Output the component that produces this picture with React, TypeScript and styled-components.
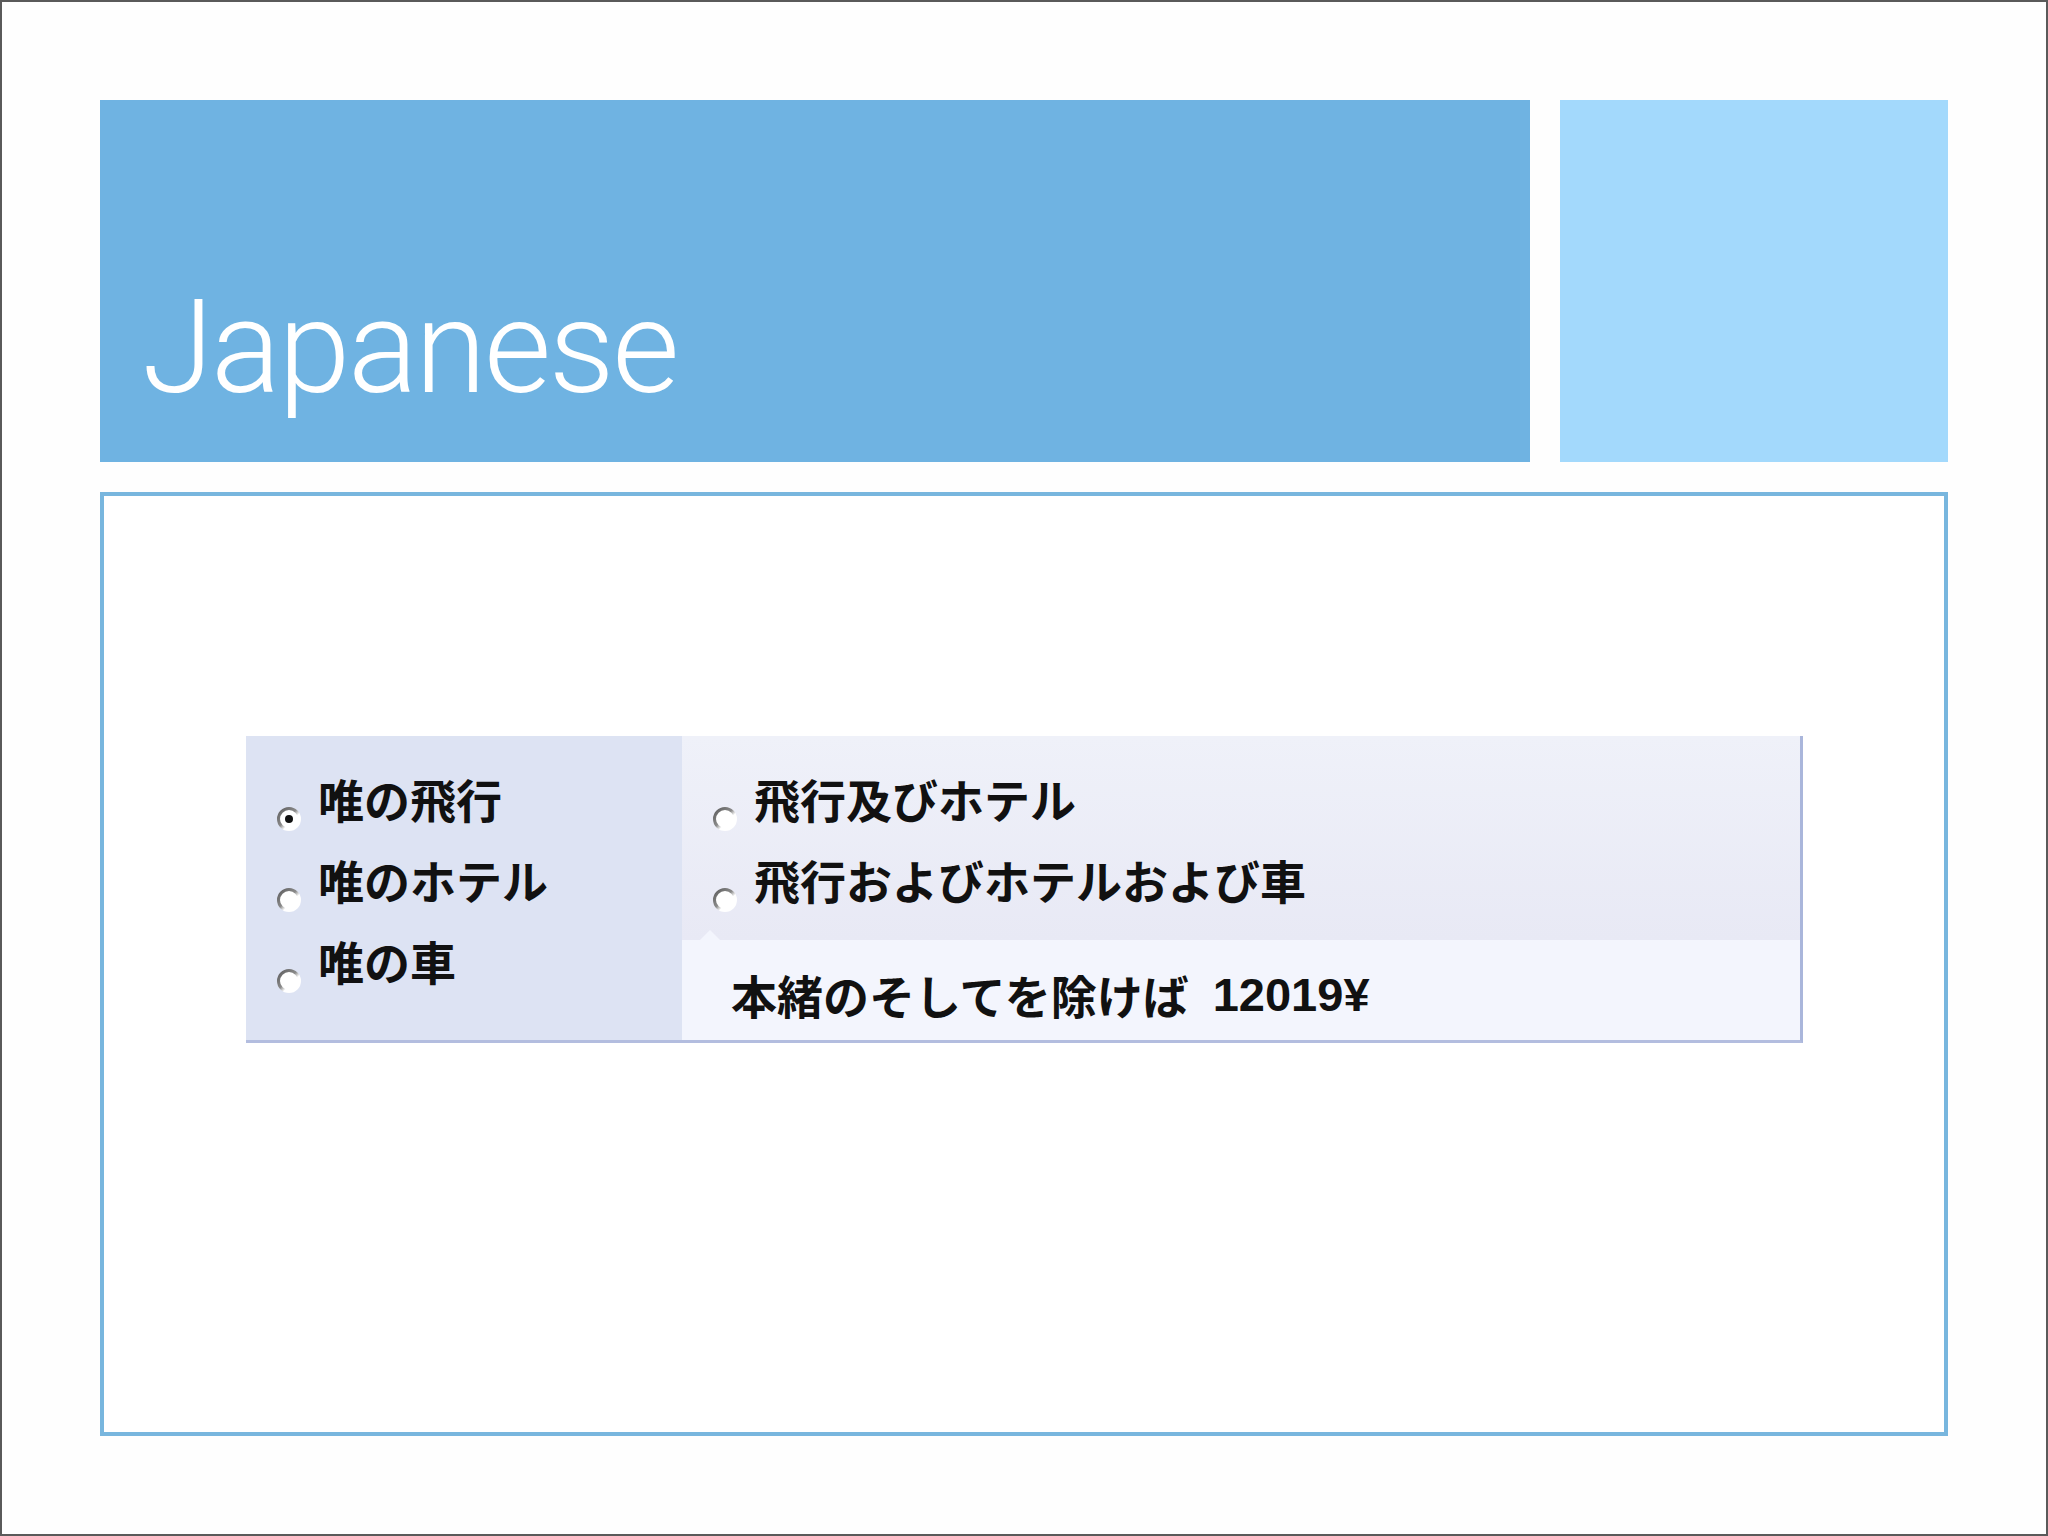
import React, { useId } from 'react';
import styled, { createGlobalStyle } from 'styled-components';

const GlobalStyle = createGlobalStyle`
  html, body {
    margin: 0;
    padding: 0;
    background: #ffffff;
  }
`;

const Page = styled.div`
  box-sizing: border-box;
  width: 2048px;
  height: 1536px;
  border: 2px solid #5a5a5a;
  padding: 98px 0 0 98px;
  background: #fefefe;
`;

const HeaderRow = styled.div`
  display: flex;
  gap: 30px;
  height: 362px;
`;

const TitleBox = styled.div`
  box-sizing: border-box;
  width: 1430px;
  height: 100%;
  background: #6fb3e2;
  display: flex;
  align-items: flex-end;
  padding: 0 0 49px 42px;
`;

const Title = styled.h1`
  margin: 0;
  font-family: Roboto, 'Liberation Sans', sans-serif;
  font-weight: 300;
  font-size: 130px;
  line-height: 1;
  color: #ffffff;
  letter-spacing: -2.5px;
`;

const SideBox = styled.div`
  width: 388px;
  height: 100%;
  background: #a3d9fc;
`;

const ContentBox = styled.div`
  box-sizing: border-box;
  margin-top: 30px;
  width: 1848px;
  height: 944px;
  border: 4px solid #78b6de;
  background: #ffffff;
  padding: 240px 0 0 142px;
`;

const Panel = styled.div`
  box-sizing: border-box;
  display: flex;
  width: 1557px;
  height: 307px;
  border-bottom: 3px solid #b3bddf;
  border-right: 3px solid #aab6db;
  font-family: 'Noto Sans CJK JP', 'Liberation Sans', sans-serif;
  font-weight: 700;
  font-size: 46px;
  color: #111111;
`;

const LeftColumn = styled.div`
  box-sizing: border-box;
  width: 436px;
  background: #dde3f3;
  padding: 21px 0 0 30px;
`;

const RightColumn = styled.div`
  flex: 1;
  display: flex;
  flex-direction: column;
`;

const Choices = styled.div`
  box-sizing: border-box;
  height: 204px;
  padding: 21px 0 0 30px;
  background: linear-gradient(#eff1f9, #e8e9f5);
`;

const Row = styled.label`
  display: flex;
  align-items: center;
  height: 81px;
`;

const RadioMark = styled.svg`
  flex: none;
  width: 26px;
  height: 26px;
  margin: 42px 16px 0 0;
`;

const Label = styled.span`
  line-height: 1;
  white-space: nowrap;
`;

const Summary = styled.div`
  position: relative;
  flex: 1;
  display: flex;
  align-items: center;
  padding: 8px 0 0 49px;
  background: #f3f5fd;
  white-space: nowrap;
  line-height: 1;

  &::before {
    content: '';
    position: absolute;
    left: 18px;
    top: -10px;
    border-left: 10px solid transparent;
    border-right: 10px solid transparent;
    border-bottom: 10px solid #f3f5fd;
  }
`;

const Price = styled.span`
  margin-left: 24px;
  font-family: 'Liberation Sans', Arial, sans-serif;
  font-weight: 700;
  font-size: 47px;
`;

function Radio({ checked }: { checked?: boolean }) {
  const id = useId();
  return (
    <RadioMark viewBox="0 0 26 26">
      <defs>
        <linearGradient id={id} x1="0" y1="0" x2="1" y2="1">
          <stop offset="0" stopColor="#5e5e5e" />
          <stop offset="0.45" stopColor="#8a8a8a" />
          <stop offset="0.62" stopColor="#ffffff" />
        </linearGradient>
      </defs>
      <circle cx="13" cy="13" r="10.5" fill="#ffffff" stroke={`url(#${id})`} strokeWidth="3" />
      {checked && <circle cx="13" cy="13" r="4" fill="#111111" />}
    </RadioMark>
  );
}

const leftOptions = ['唯の飛行', '唯のホテル', '唯の車'];
const rightOptions = ['飛行及びホテル', '飛行およびホテルおよび車'];

export default function App() {
  return (
    <>
      <GlobalStyle />
      <Page>
        <HeaderRow>
          <TitleBox>
            <Title>Japanese</Title>
          </TitleBox>
          <SideBox />
        </HeaderRow>
        <ContentBox>
          <Panel>
            <LeftColumn>
              {leftOptions.map((opt, i) => (
                <Row key={opt}>
                  <Radio checked={i === 0} />
                  <Label>{opt}</Label>
                </Row>
              ))}
            </LeftColumn>
            <RightColumn>
              <Choices>
                {rightOptions.map((opt) => (
                  <Row key={opt}>
                    <Radio />
                    <Label>{opt}</Label>
                  </Row>
                ))}
              </Choices>
              <Summary>
                本緒のそしてを除けば<Price>12019¥</Price>
              </Summary>
            </RightColumn>
          </Panel>
        </ContentBox>
      </Page>
    </>
  );
}
